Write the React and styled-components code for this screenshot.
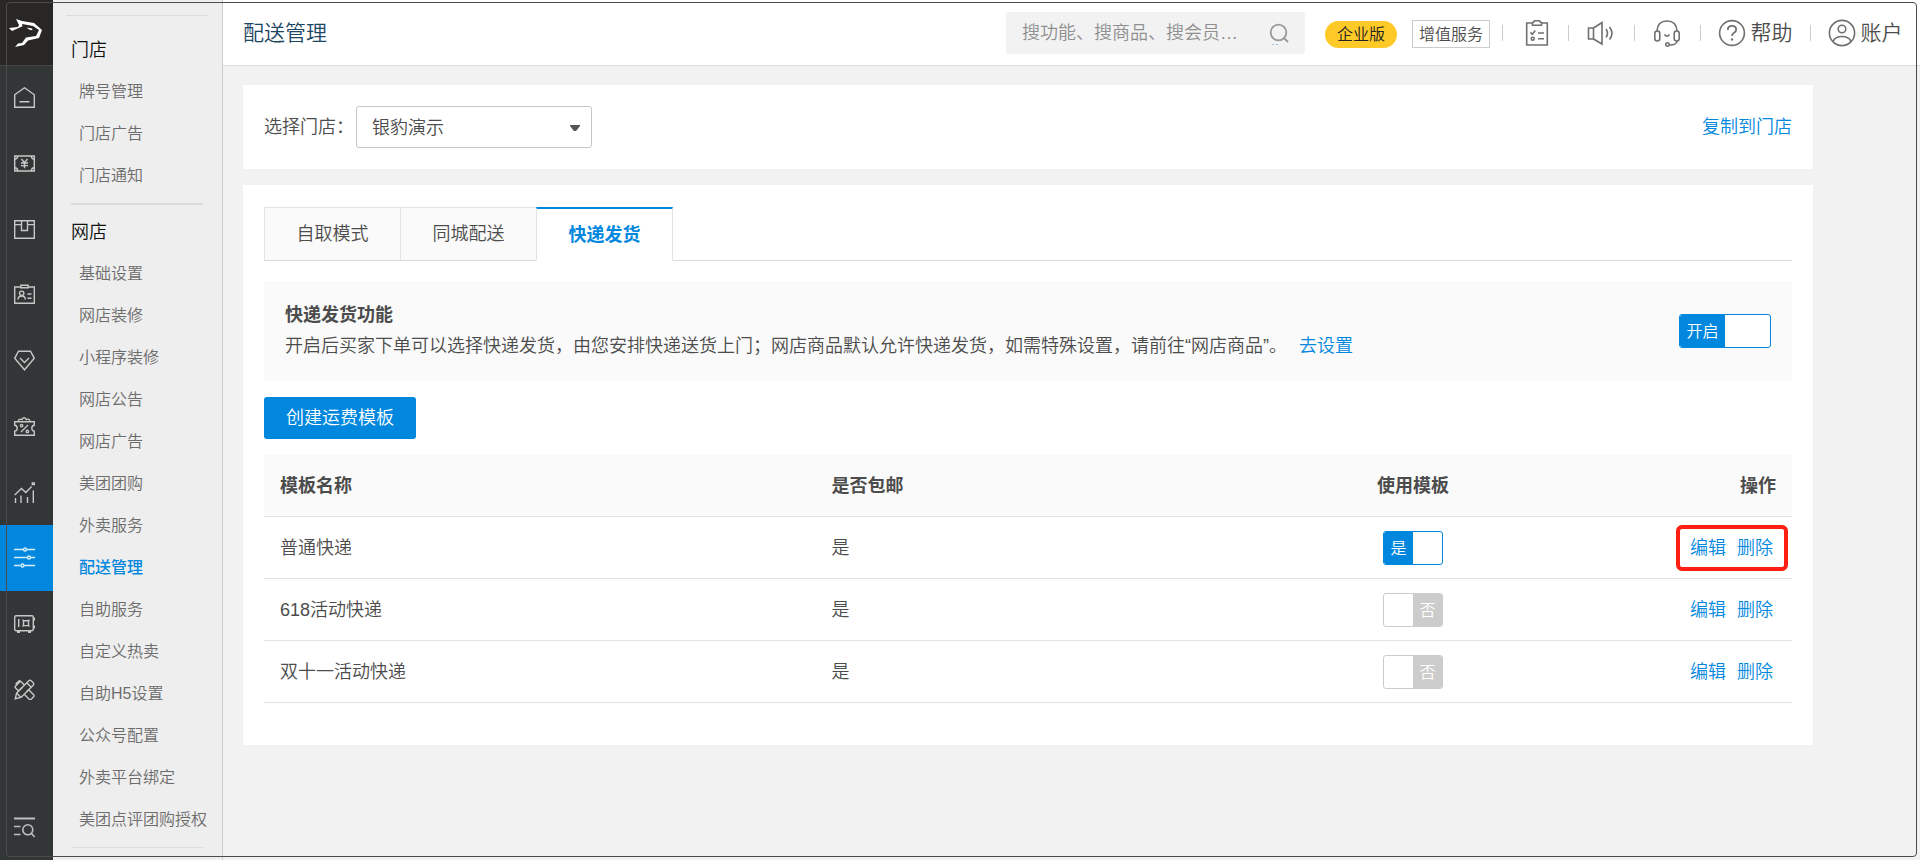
import React, { useState } from "react";
import styled, { createGlobalStyle, css } from "styled-components";

const blue = "#0188de";
const line = "#e2e2e2";

const GlobalStyle = createGlobalStyle`
  *, *::before, *::after {
    box-sizing: border-box;
  }
  body {
    margin: 0;
    background: #f2f2f2;
    color: #4c4c4c;
    font-family: "Liberation Sans", "Noto Sans CJK SC", sans-serif;
    font-size: 18px;
    font-weight: 350;
    line-height: 24px;
  }
  button, input, select {
    font: inherit;
    color: inherit;
  }
  a {
    color: inherit;
    text-decoration: none;
  }
`;

const Page = styled.div`
  display: flex;
  min-height: 100vh;
`;

const Frame = styled.div`
  position: fixed;
  top: 2px;
  right: 3px;
  bottom: 3px;
  left: 6px;
  border: 1px solid #4c4c4c;
  border-radius: 4px;
  pointer-events: none;
  z-index: 10;
`;

/* ---------- icon rail ---------- */

const Rail = styled.nav`
  display: flex;
  flex-direction: column;
  flex: none;
  width: 53px;
  height: 100vh;
  background: #333637;
`;

const Logo = styled.a`
  display: flex;
  align-items: center;
  height: 65px;
  padding-left: 9px;
  background: #292725;
  box-shadow: 0 1px 0 #474747;
`;

const RailList = styled.div`
  display: flex;
  flex-direction: column;
  flex: 1;
`;

const RailLink = styled.a`
  display: flex;
  align-items: center;
  flex: 1;
  padding-left: 14px;
  color: ${({ $active }) => ($active ? "#d8edfa" : "#c6c7c7")};
  background: ${({ $active }) => ($active ? blue : "transparent")};
`;

const RailFooter = styled.div`
  display: flex;
  align-items: flex-end;
  height: 138px;
  padding: 0 0 22px 14px;
  color: #bdbebe;
`;

const RailIcon = ({ children }) => (
  <svg
    width="21"
    height="21"
    viewBox="0 0 21 21"
    fill="none"
    stroke="currentColor"
    strokeWidth="1.4"
    aria-hidden="true"
  >
    {children}
  </svg>
);

const railItems = [
  {
    name: "首页",
    icon: <path d="M.7 7.8 10.5.8l9.8 7v12.4H.7zM5.5 14.800h10" />,
  },
  {
    name: "收银",
    icon: (
      <>
        <path d="M.7 3h19.6v15H.7z" />
        <path d="M.7 6.2Q3.6 6 3.8 3M20.3 6.2Q17.4 6 17.2 3M.7 14.8q2.9.2 3.1 3.2M20.3 14.8q-2.9.2-3.1 3.2M7.5 6l3 3.6 3-3.6M10.5 9.6v5.6M7 10h7M7 12.6h7" />
      </>
    ),
  },
  {
    name: "商品",
    icon: <path d="M.7 1.7h19.6v17.6H.7zM.7 5.6h6.8M13.5 5.6h6.8M7.5 1.7v9.8h6V1.7" />,
  },
  {
    name: "会员",
    icon: (
      <>
        <path d="M6.5 3H.7v16.3h19.6V3h-5.8M6.8 1.2h7.4v2.6H6.8z" />
        <path d="M4 15.5q.3-3.5 3.7-3.5t3.7 3.5M13.5 10h4M13.5 14.3h4" />
        <circle cx="7.7" cy="9.3" r="2.2" />
      </>
    ),
  },
  {
    name: "营销",
    icon: <path d="M4.5 1.2h12l3.8 7.1-9.8 11.5L.7 8.3zM6 8l4.5 4.4L15 8" />,
  },
  {
    name: "优惠",
    icon: (
      <>
        <path d="M.7 5.8h19.6v3.4q-2.5.3-2.5 3t2.5 3v4.1H.7v-4.1q2.5-.3 2.5-3t-2.5-3z" />
        <path d="M4.2 5.5Q4.7 2 8 3.6q2-3.6 4.3 0Q15.500 2 16 5.500M7 16l7-7" />
        <circle cx="7.6" cy="9.6" r="1.2" />
        <circle cx="13.4" cy="15.4" r="1.2" />
      </>
    ),
  },
  {
    name: "报表",
    icon: <path d="M.7 13 7.4 6.4l4.4 4.2 5.800-6M1.500 16v5M7 13.500V21M13.500 15v6M19.300 8.500V21M18.300 1h2v1.600h-2z" />,
  },
  {
    name: "门店",
    active: true,
    icon: (
      <>
        <path d="M0 2.500h9M12.800 2.500H21M0 10.500h13M17 10.500h4M0 18.500h6.500M10.300 18.500H21" />
        <circle cx="11" cy="2.500" r="1.500" />
        <circle cx="15" cy="10.500" r="1.500" />
        <circle cx="8.500" cy="18.500" r="1.500" />
      </>
    ),
  },
  {
    name: "资金",
    icon: (
      <>
        <rect x=".7" y="2.700" width="18.600" height="15" rx="1.500" />
        <path d="M4.700 6v8M9.500 7.800h5v4.800h-5zM8.500 6.800l1 1M15.500 6.800l-1 1M8.500 13.600l1-1M15.500 13.600l-1-1" />
        <path d="M20.200 4.500v3M20.200 12.500v3M3 19h3M14 19h3" strokeWidth="1.800" />
      </>
    ),
  },
  {
    name: "工具",
    icon: (
      <>
        <path d="M1.200 19.800 2.600 14 14.800 1.800q1.200-1.200 2.400 0l2 2q1.200 1.200 0 2.400L7 18.400z" />
        <path d="m12.800 3.800 4.400 4.400M2.600 14 7 18.400M8.200 8.400 4.600 12 1.600 9q-1-1 0-2M1.600 7l4.800-4.800M1.600 5.200l3-3q1-1 2 0l4 4M12.600 12.800l2-2 5 5q1 1 0 2l-2.400 2.400q-1 1-2 0l-5-5" />
      </>
    ),
  },
];

/* ---------- side menu ---------- */

const Side = styled.aside`
  flex: none;
  width: 170px;
  height: 100vh;
  overflow: hidden;
  padding-top: 15px;
  background: #eee;
  border-right: 1px solid #ccc;
`;

const SideTop = styled.div`
  height: 1px;
  margin: 0 13px 7px;
  background: #dcdcdc;
`;

const MenuGroup = styled.section`
  margin: 0 19px 0 18px;
  padding: 6px 0;
  border-bottom: ${({ $last }) => ($last ? 1 : 2)}px solid #dcdcdc;
`;

const MenuTitle = styled.h2`
  margin: 0;
  font-size: 18px;
  font-weight: 350;
  line-height: 42px;
  color: #111;
`;

const MenuLink = styled.a`
  display: block;
  padding-left: 8px;
  white-space: nowrap;
  font-size: 16px;
  line-height: 42px;
  color: #6c6c6c;
  ${({ $active }) =>
    $active &&
    css`
      color: ${blue};
      font-weight: 500;
    `}
`;

const menu = [
  { title: "门店", items: ["牌号管理", "门店广告", "门店通知"] },
  {
    title: "网店",
    items: [
      "基础设置",
      "网店装修",
      "小程序装修",
      "网店公告",
      "网店广告",
      "美团团购",
      "外卖服务",
      "配送管理",
      "自助服务",
      "自定义热卖",
      "自助H5设置",
      "公众号配置",
      "外卖平台绑定",
      "美团点评团购授权",
    ],
  },
];

/* ---------- header ---------- */

const Main = styled.div`
  flex: 1;
  min-width: 0;
`;

const Header = styled.header`
  display: flex;
  align-items: center;
  height: 66px;
  padding-left: 20px;
  background: #fff;
  border-bottom: 1px solid #dcdcdc;
`;

const PageTitle = styled.h1`
  flex: 1;
  margin: 0;
  font-size: 21px;
  font-weight: 350;
  line-height: 30px;
  color: #1c4662;
`;

const Search = styled.form`
  display: flex;
  align-items: center;
  width: 299px;
  height: 42px;
  margin-right: 20px;
  padding: 0 16px;
  background: #f2f2f2;
  border-radius: 3px;
`;

const SearchInput = styled.input`
  flex: 1;
  min-width: 0;
  padding: 0;
  border: 0;
  outline: 0;
  background: none;
  &::placeholder {
    color: #8f8f8f;
    opacity: 1;
  }
`;

const SearchButton = styled.button`
  display: flex;
  padding: 0;
  border: 0;
  background: none;
`;

const Plan = styled.span`
  height: 27px;
  margin: 4px 15px 0 0;
  padding: 0 12px;
  border-radius: 14px;
  background: #ffca28;
  color: #222;
  font-size: 16px;
  line-height: 27px;
`;

const Service = styled.a`
  height: 28px;
  margin: 3px 12px 0 0;
  padding: 0 6px;
  border: 1px solid #ccc;
  font-size: 16px;
  line-height: 28px;
`;

const Tool = styled.a`
  position: relative;
  display: flex;
  align-items: center;
  justify-content: center;
  gap: 5px;
  width: ${({ $wide }) => ($wide ? 110 : 66)}px;
  height: 30px;
  font-size: 21px;
  line-height: 30px;
  &::before {
    content: "";
    position: absolute;
    left: 0;
    top: 7px;
    width: 1px;
    height: 16px;
    background: #ccc;
  }
  svg {
    flex: none;
  }
`;

const ToolIcon = ({ children }) => (
  <svg
    width="28"
    height="28"
    viewBox="0 0 28 28"
    fill="none"
    stroke="#707070"
    strokeWidth="1.6"
    aria-hidden="true"
  >
    {children}
  </svg>
);

const tools = [
  {
    name: "待办",
    icon: (
      <>
        <path d="M11 4H5.700v22h20.600V4H21M11.500 3.500q1.500 0 2-1.700h5q.5 1.700 2 1.700v2.800h-9zM17 14h6M17 19.800h6" />
        <path d="m9.500 13.400 1.800 1.800 3-3.600" />
        <circle cx="11.700" cy="19.800" r="1.500" />
      </>
    ),
  },
  {
    name: "公告",
    icon: (
      <path d="M1.500 9h5v11h-5zM6.500 9 15 3.500v21.500L6.500 20M19 10q3 4.200 0 8.400M22.500 8q5 6.200 0 12.600" />
    ),
  },
  {
    name: "客服",
    icon: (
      <>
        <rect x="1.800" y="12" width="5" height="10" rx="2.500" />
        <rect x="21.200" y="12" width="5" height="10" rx="2.500" />
        <path d="M4 12Q4.500 2 14 2t10 10M24 22q-.5 4-7 4M11.500 15.500q2.500 3.500 5 0" />
        <circle cx="14.500" cy="25.500" r="1.700" />
      </>
    ),
  },
];

/* ---------- content ---------- */

const Content = styled.main`
  display: flex;
  flex-direction: column;
  gap: 16px;
  padding: 19px 107px 40px 20px;
`;

const StoreCard = styled.section`
  display: flex;
  align-items: center;
  height: 84px;
  padding: 0 21px;
  background: #fff;
`;

const StoreLabel = styled.label`
  width: 92px;
  white-space: nowrap;
`;

const SelectBox = styled.div`
  position: relative;
  width: 236px;
  svg {
    position: absolute;
    top: 19px;
    right: 12px;
    pointer-events: none;
  }
`;

const Select = styled.select`
  width: 100%;
  height: 42px;
  padding: 2px 15px 0;
  border: 1px solid #c6c6c6;
  border-radius: 3px;
  background: #fff;
  appearance: none;
`;

const Link = styled.a`
  color: ${blue};
`;

const CopyLink = styled(Link)`
  margin-left: auto;
`;

const Card = styled.section`
  padding: 22px 21px 42px;
  background: #fff;
`;

const Tabs = styled.div`
  display: flex;
  height: 54px;
  border-bottom: 1px solid #dcdcdc;
`;

const Tab = styled.button`
  width: 136px;
  height: 54px;
  padding: 0;
  border: 1px solid ${line};
  border-right: 0;
  border-bottom-color: #dcdcdc;
  background: #fafafa;
  ${({ $active }) =>
    $active &&
    css`
      width: 137px;
      border-top: 2px solid ${blue};
      border-right: 1px solid ${line};
      border-bottom-color: #fff;
      background: #fff;
      color: ${blue};
      font-weight: 700;
    `}
`;

const Notice = styled.div`
  display: flex;
  align-items: center;
  justify-content: space-between;
  min-height: 100px;
  margin: 20px 0 16px;
  padding: 0 21px;
  background: #fafafa;
  line-height: 31px;
`;

const NoticeTitle = styled.h3`
  margin: 0;
  font-size: 18px;
  font-weight: 700;
`;

const NoticeText = styled.p`
  margin: 0;
  a {
    margin-left: 12px;
  }
`;

const CreateButton = styled.button`
  display: block;
  height: 42px;
  padding: 0 22px;
  border: 0;
  border-radius: 3px;
  background: ${blue};
  color: #fff;
`;

const Table = styled.table`
  width: 100%;
  margin-top: 16px;
  border-collapse: separate;
  border-spacing: 0;
  table-layout: fixed;
  text-align: left;
`;

const cell = css`
  height: 62px;
  padding: 0 16px;
  border-bottom: 1px solid ${line};
  text-align: ${({ $align }) => $align || "left"};
`;

const Th = styled.th`
  ${cell}
  width: ${({ $width }) => $width};
  background: #fafafa;
  font-weight: 700;
`;

const Td = styled.td`
  ${cell}
`;

const Actions = styled.div`
  position: relative;
  display: inline-flex;
  gap: 11px;
  padding-right: 3px;
  vertical-align: middle;
`;

const Highlight = styled.span`
  position: absolute;
  inset: -11px -12px -11px -14px;
  border: 4px solid #ff1f12;
  border-radius: 6px;
  pointer-events: none;
`;

const Switch = styled.label`
  position: relative;
  display: inline-flex;
  width: ${({ $large }) => ($large ? 92 : 60)}px;
  height: 34px;
  border: 1px solid ${({ $on }) => ($on ? blue : "#ccc")};
  border-radius: 3px;
  overflow: hidden;
  flex-direction: ${({ $on }) => ($on ? "row" : "row-reverse")};
  vertical-align: middle;
  background: #fff;
  cursor: pointer;
  input {
    position: absolute;
    inset: 0;
    margin: 0;
    opacity: 0;
  }
  span {
    width: 50%;
    background: ${({ $on }) => ($on ? blue : "#ccc")};
    color: #fff;
    font-size: 16px;
    line-height: 33px;
    text-align: center;
  }
`;

const Toggle = ({ defaultOn, large, onText, offText }) => {
  const [on, setOn] = useState(defaultOn);
  return (
    <Switch $on={on} $large={large}>
      <input type="checkbox" checked={on} onChange={() => setOn(!on)} />
      <span>{on ? onText : offText}</span>
    </Switch>
  );
};

const templates = [
  { name: "普通快递", free: "是", used: true, marked: true },
  { name: "618活动快递", free: "是", used: false },
  { name: "双十一活动快递", free: "是", used: false },
];

const App = () => {
  return (
    <>
      <GlobalStyle />
      <Page>
        <Rail>
          <Logo href="#" aria-label="银豹">
            <svg width="33" height="28" viewBox="0 0 33 28" fill="#fff">
              <path d="M7 0l6 2 12 2 8 7-3 8-11 2.500L15 26l-9 2 3-3.500 4-.5 4-5.500L27 17l3-6-6-4-11-2 .5 2.200L3 12 0 9l9-1 1-2z" />
              <path d="M17.500 8.500 23 9.600l.5 1.600-3-.4z" />
            </svg>
          </Logo>
          <RailList>
            {railItems.map((item) => (
              <RailLink
                key={item.name}
                href="#"
                aria-label={item.name}
                $active={item.active}
              >
                <RailIcon>{item.icon}</RailIcon>
              </RailLink>
            ))}
          </RailList>
          <RailFooter>
            <RailIcon>
              <path d="M0 1.500h21" strokeWidth="2" />
              <path d="M0 9.500h6.500M0 17.500h6.500M17.500 16.500l3.200 3.500" strokeWidth="1.600" />
              <circle cx="13.800" cy="12.800" r="5" strokeWidth="1.600" />
            </RailIcon>
          </RailFooter>
        </Rail>

        <Side>
          <SideTop />
          {menu.map((group, i) => (
            <MenuGroup key={group.title} $last={i === menu.length - 1}>
              <MenuTitle>{group.title}</MenuTitle>
              {group.items.map((item) => (
                <MenuLink key={item} href="#" $active={item === "配送管理"}>
                  {item}
                </MenuLink>
              ))}
            </MenuGroup>
          ))}
        </Side>

        <Main>
          <Header>
            <PageTitle>配送管理</PageTitle>
            <Search onSubmit={(e) => e.preventDefault()}>
              <SearchInput
                aria-label="搜索"
                placeholder="搜功能、搜商品、搜会员…"
              />
              <SearchButton aria-label="搜索">
                <svg
                  width="22"
                  height="24"
                  viewBox="0 0 22 24"
                  fill="none"
                  stroke="#999"
                  strokeWidth="1.800"
                >
                  <circle cx="11.500" cy="11.500" r="7.800" />
                  <path d="m17 17 4 4" />
                  <path d="M5 23.500h2M9 23.500h2" stroke="#8cc8f0" strokeWidth="1" />
                </svg>
              </SearchButton>
            </Search>
            <Plan>企业版</Plan>
            <Service href="#">增值服务</Service>
            {tools.map((tool) => (
              <Tool key={tool.name} href="#" aria-label={tool.name}>
                <ToolIcon>{tool.icon}</ToolIcon>
              </Tool>
            ))}
            <Tool href="#" $wide>
              <ToolIcon>
                <circle cx="14" cy="14" r="12.400" />
                <path d="M9.800 11q0-4.200 4.200-4.200t4.200 3.800q0 2-2.100 3.200-2.100 1.200-2.100 3.200" strokeWidth="1.800" />
                <circle cx="14" cy="20.500" r="1.200" fill="#777" stroke="none" />
              </ToolIcon>
              帮助
            </Tool>
            <Tool href="#" $wide>
              <ToolIcon>
                <circle cx="14" cy="14" r="12.600" />
                <circle cx="14" cy="10" r="3.800" />
                <path d="M5 22.500q2-5 9-5t9 5" />
              </ToolIcon>
              账户
            </Tool>
          </Header>

          <Content>
            <StoreCard>
              <StoreLabel htmlFor="store">选择门店：</StoreLabel>
              <SelectBox>
                <Select id="store">
                  <option>银豹演示</option>
                </Select>
                <svg width="10" height="6" viewBox="0 0 10 6" fill="#555">
                  <path d="M0 0h10v1L6 6H4L0 1z" />
                </svg>
              </SelectBox>
              <CopyLink href="#">复制到门店</CopyLink>
            </StoreCard>

            <Card>
              <Tabs>
                <Tab>自取模式</Tab>
                <Tab>同城配送</Tab>
                <Tab $active>快递发货</Tab>
              </Tabs>

              <Notice>
                <div>
                  <NoticeTitle>快递发货功能</NoticeTitle>
                  <NoticeText>
                    开启后买家下单可以选择快递发货，由您安排快递送货上门；网店商品默认允许快递发货，如需特殊设置，请前往“网店商品”。
                    <Link href="#">去设置</Link>
                  </NoticeText>
                </div>
                <Toggle large defaultOn onText="开启" offText="关闭" />
              </Notice>

              <CreateButton>创建运费模板</CreateButton>

              <Table>
                <thead>
                  <tr>
                    <Th $width="36.1%">模板名称</Th>
                    <Th $width="29.1%">是否包邮</Th>
                    <Th $width="20%" $align="center">
                      使用模板
                    </Th>
                    <Th $align="right">操作</Th>
                  </tr>
                </thead>
                <tbody>
                  {templates.map((row) => (
                    <tr key={row.name}>
                      <Td>{row.name}</Td>
                      <Td>{row.free}</Td>
                      <Td $align="center">
                        <Toggle defaultOn={row.used} onText="是" offText="否" />
                      </Td>
                      <Td $align="right">
                        <Actions>
                          <Link href="#">编辑</Link>
                          <Link href="#">删除</Link>
                          {row.marked && <Highlight />}
                        </Actions>
                      </Td>
                    </tr>
                  ))}
                </tbody>
              </Table>
            </Card>
          </Content>
        </Main>
      </Page>
      <Frame />
    </>
  );
};

export default App;
